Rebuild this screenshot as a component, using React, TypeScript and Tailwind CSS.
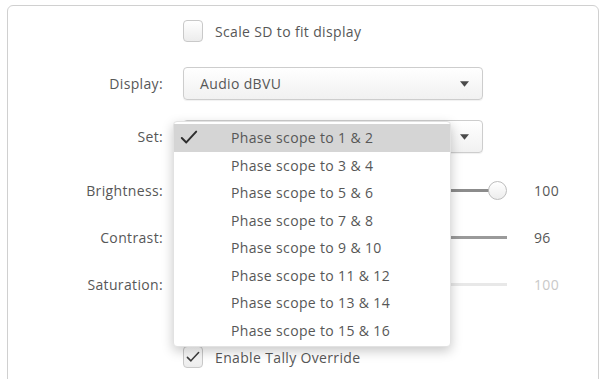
const SETS = [
  'Phase scope to 1 & 2',
  'Phase scope to 3 & 4',
  'Phase scope to 5 & 6',
  'Phase scope to 7 & 8',
  'Phase scope to 9 & 10',
  'Phase scope to 11 & 12',
  'Phase scope to 13 & 14',
  'Phase scope to 15 & 16',
];

function Check({ className = '' }: { className?: string }) {
  return (
    <svg viewBox="0 0 20 16" className={className} fill="none">
      <path d="M2 8.5 L7 13.5 L18 1.5" stroke="currentColor" strokeWidth="2.2" strokeLinecap="round" strokeLinejoin="round" />
    </svg>
  );
}

function Checkbox({ checked }: { checked?: boolean }) {
  return (
    <div className="w-[20px] h-[22px] rounded-[4px] border border-[#c9c9c9] bg-gradient-to-b from-white to-[#ececec] flex items-center justify-center text-[#3c3c3c]">
      {checked && <Check className="w-[14px] h-[12px]" />}
    </div>
  );
}

function Arrow() {
  return (
    <svg viewBox="0 0 10 6" className="w-[9px] h-[6px] text-[#4a4a4a]">
      <path d="M0 0 H10 L5 6 Z" fill="currentColor" />
    </svg>
  );
}

function Select({ value }: { value: string }) {
  return (
    <div className="w-[300px] h-[33px] rounded-[4px] border border-[#cdcdcd] bg-gradient-to-b from-white to-[#f1f1f1] shadow-[0_1px_1px_rgba(0,0,0,0.06)] flex items-center pl-[16px] pr-[13px]">
      <span className="flex-1">{value}</span>
      <Arrow />
    </div>
  );
}

function Row({ label, children, className = '' }: { label: string; children: React.ReactNode; className?: string }) {
  return (
    <div className={`flex items-center ${className}`}>
      <div className="w-[155px] text-right whitespace-nowrap">{label}</div>
      <div className="ml-[20px] flex items-center">{children}</div>
    </div>
  );
}

function Slider({ track, value, valueColor, knob }: { track: string; value: string; valueColor: string; knob?: boolean }) {
  return (
    <>
      <div className="w-[324px] h-[20px] flex items-center">
        <div className={`flex-1 h-[3px] ${track}`} />
        {knob && (
          <div className="w-[19px] h-[19px] rounded-full border border-[#bdbdbd] bg-gradient-to-b from-white to-[#ededed] -ml-[1px]" />
        )}
      </div>
      <span className={`ml-[27px] ${valueColor}`}>{value}</span>
    </>
  );
}

export default function App() {
  return (
    <div className="relative w-[600px] h-[379px] overflow-hidden bg-white text-[14px] tracking-[0.35px] text-[#575757] font-['Open_Sans',sans-serif]">
      <div className="ml-[7px] mt-[5px] w-[592px] h-[420px] rounded-t-[6px] border border-[#d0d0d0] pt-[14px]">
        <div className="flex items-center h-[22px] pl-[175px]">
          <Checkbox />
          <span className="ml-[12px]">Scale SD to fit display</span>
        </div>

        <Row label="Display:" className="mt-[25px]">
          <Select value="Audio dBVU" />
        </Row>

        <Row label="Set:" className="mt-[20px]">
          <Select value="" />
        </Row>

        <Row label="Brightness:" className="mt-[27px] h-[20px]">
          <Slider track="bg-[#8c8c8c]" value="100" valueColor="text-[#575757]" knob />
        </Row>

        <Row label="Contrast:" className="mt-[27px] h-[20px]">
          <Slider track="bg-[#9a9a9a]" value="96" valueColor="text-[#575757]" />
        </Row>

        <Row label="Saturation:" className="mt-[27px] h-[20px]">
          <Slider track="bg-[#e8e8e8]" value="100" valueColor="text-[#c9c9c9]" />
        </Row>

        <div className="flex items-center h-[22px] pl-[175px] mt-[52px]">
          <Checkbox checked />
          <span className="ml-[12px]">Enable Tally Override</span>
        </div>
      </div>

      {/* open dropdown for Set */}
      <div className="absolute left-[173px] top-[121px] w-[278px] h-[226px] bg-white rounded-[4px] border border-[#e2e2e2] shadow-[0_4px_12px_rgba(0,0,0,0.22)] pt-[2px]">
        {SETS.map((s, i) => (
          <div
            key={s}
            className={`h-[27.5px] flex items-center ${i === 0 ? 'bg-[#d5d5d5]' : ''}`}
          >
            <div className="w-[57px] pl-[6px] flex items-center text-[#2e2e2e]">
              {i === 0 && <Check className="w-[18px] h-[15px]" />}
            </div>
            <span>{s}</span>
          </div>
        ))}
      </div>
    </div>
  );
}
